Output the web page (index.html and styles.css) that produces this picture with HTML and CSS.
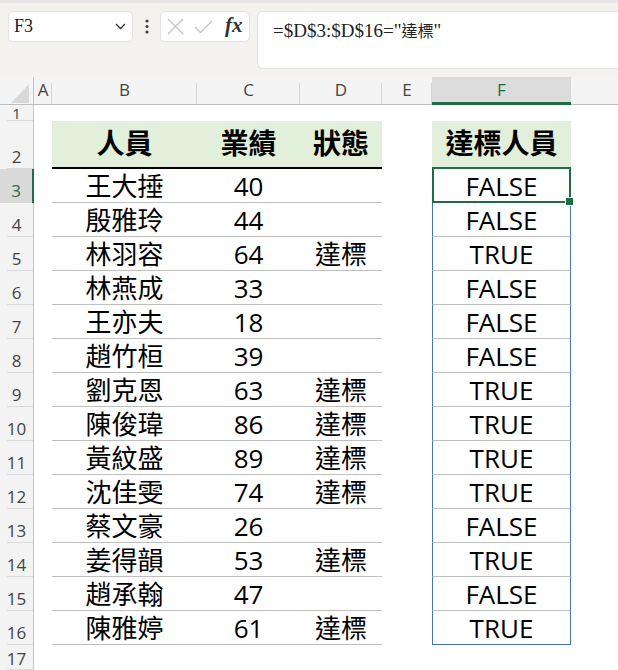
FILE: index.html
```html
<!DOCTYPE html>
<html lang="zh-Hant">
<head>
<meta charset="utf-8">
<title>Excel</title>
<link rel="stylesheet" href="styles.css">
</head>
<body>
<div class="top">
  <div class="namebox"><span>F3</span><svg width="11" height="7" viewBox="0 0 11 7"><polyline points="1,1 5.5,5.5 10,1" fill="none" stroke="#333" stroke-width="1.3"/></svg></div>
  <div class="dots"><svg width="4" height="15" viewBox="0 0 4 15"><circle cx="2" cy="2" r="1.6" fill="#444"/><circle cx="2" cy="7.5" r="1.6" fill="#444"/><circle cx="2" cy="13" r="1.6" fill="#444"/></svg></div>
  <div class="fnbox">
    <svg class="ix" width="17" height="17" viewBox="0 0 17 17"><path d="M1 1L16 16M16 1L1 16" stroke="#c4c4c4" stroke-width="1.4" fill="none"/></svg>
    <svg class="ic" width="19" height="14" viewBox="0 0 19 14"><polyline points="1,7 6.5,12.5 18,1" stroke="#c4c4c4" stroke-width="1.4" fill="none"/></svg>
    <span class="fx">fx</span>
  </div>
  <div class="formula">=$D$3:$D$16="<span class="cj">達標</span>"</div>
</div>

<div class="colhdr">
  <div class="corner"><svg width="18" height="19" viewBox="0 0 18 19"><polygon points="18,0 18,19 0,19" fill="#d9d9d9"/></svg></div>
  <div class="ch">A</div>
  <div class="ch">B</div>
  <div class="ch">C</div>
  <div class="ch">D</div>
  <div class="ch">E</div>
  <div class="ch sel">F</div>
  <div class="ch end"></div>
</div>

<div class="row r1"><div class="rh">1</div><div></div><div></div><div></div><div></div><div></div><div></div><div></div></div>
<div class="row r2"><div class="rh">2</div><div></div><div class="c hd">人員</div><div class="c hd">業績</div><div class="c hd">狀態</div><div></div><div class="c fh">達標人員</div><div></div></div>
<div class="row"><div class="rh on">3</div><div></div><div class="c t">王大捶</div><div class="c t">40</div><div class="c t"></div><div></div><div class="c f sel">FALSE</div><div></div></div>
<div class="row"><div class="rh">4</div><div></div><div class="c t">殷雅玲</div><div class="c t">44</div><div class="c t"></div><div></div><div class="c f">FALSE</div><div></div></div>
<div class="row"><div class="rh">5</div><div></div><div class="c t">林羽容</div><div class="c t">64</div><div class="c t">達標</div><div></div><div class="c f">TRUE</div><div></div></div>
<div class="row"><div class="rh">6</div><div></div><div class="c t">林燕成</div><div class="c t">33</div><div class="c t"></div><div></div><div class="c f">FALSE</div><div></div></div>
<div class="row"><div class="rh">7</div><div></div><div class="c t">王亦夫</div><div class="c t">18</div><div class="c t"></div><div></div><div class="c f">FALSE</div><div></div></div>
<div class="row"><div class="rh">8</div><div></div><div class="c t">趙竹桓</div><div class="c t">39</div><div class="c t"></div><div></div><div class="c f">FALSE</div><div></div></div>
<div class="row"><div class="rh">9</div><div></div><div class="c t">劉克恩</div><div class="c t">63</div><div class="c t">達標</div><div></div><div class="c f">TRUE</div><div></div></div>
<div class="row"><div class="rh">10</div><div></div><div class="c t">陳俊瑋</div><div class="c t">86</div><div class="c t">達標</div><div></div><div class="c f">TRUE</div><div></div></div>
<div class="row"><div class="rh">11</div><div></div><div class="c t">黃紋盛</div><div class="c t">89</div><div class="c t">達標</div><div></div><div class="c f">TRUE</div><div></div></div>
<div class="row"><div class="rh">12</div><div></div><div class="c t">沈佳雯</div><div class="c t">74</div><div class="c t">達標</div><div></div><div class="c f">TRUE</div><div></div></div>
<div class="row"><div class="rh">13</div><div></div><div class="c t">蔡文豪</div><div class="c t">26</div><div class="c t"></div><div></div><div class="c f">FALSE</div><div></div></div>
<div class="row"><div class="rh">14</div><div></div><div class="c t">姜得韻</div><div class="c t">53</div><div class="c t">達標</div><div></div><div class="c f">TRUE</div><div></div></div>
<div class="row"><div class="rh">15</div><div></div><div class="c t">趙承翰</div><div class="c t">47</div><div class="c t"></div><div></div><div class="c f">FALSE</div><div></div></div>
<div class="row"><div class="rh">16</div><div></div><div class="c t">陳雅婷</div><div class="c t">61</div><div class="c t">達標</div><div></div><div class="c f last">TRUE</div><div></div></div>
<div class="row r17"><div class="rh">17</div><div></div><div></div><div></div><div></div><div></div><div></div><div></div></div>
</body>
</html>
```
FILE: styles.css
```css
* { box-sizing: border-box; }
html, body { margin: 0; padding: 0; }
body {
  width: 618px;
  height: 670px;
  overflow: hidden;
  background: #fff;
  font-family: "Open Sans", "Noto Sans CJK TC", sans-serif;
}

/* toolbar */
.top {
  height: 77px;
  background: #f3f2ee;
  border-top: 3px solid #e6e6e6;
  display: flex;
  align-items: flex-start;
  padding: 8px 0 0 8px;
}
.namebox {
  width: 125px;
  height: 31px;
  background: #fff;
  border: 1px solid #e3e3e3;
  border-radius: 5px;
  display: flex;
  align-items: center;
  justify-content: space-between;
  padding: 0 6px 0 5px;
  font-family: "Liberation Serif", "Noto Sans CJK TC", serif;
  font-size: 18px;
  color: #222;
}
.dots {
  width: 27px;
  height: 31px;
  display: flex;
  align-items: center;
  justify-content: center;
}
.fnbox {
  width: 90px;
  height: 31px;
  background: #fff;
  border: 1px solid #e3e3e3;
  border-radius: 5px;
  display: flex;
  align-items: center;
  padding: 0 0 0 6px;
}
.ix { margin-right: 10px; }
.ic { margin-right: 12px; }
.fx {
  font-family: "Liberation Serif", serif;
  font-style: italic;
  font-weight: bold;
  font-size: 21px;
  line-height: 1;
  color: #333;
  margin-top: -3px;
}
.formula {
  margin-left: 7px;
  flex: 1;
  height: 58px;
  background: #fff;
  border: 1px solid #e3e3e3;
  border-right: none;
  border-radius: 6px 0 0 6px;
  padding: 6px 0 0 15px;
  font-family: "Liberation Serif", "Noto Sans CJK TC", serif;
  font-size: 19px;
  color: #222;
}
.cj { font-family: "Noto Sans CJK TC", sans-serif; font-size: 16px; }

/* column header */
.colhdr {
  display: grid;
  grid-template-columns: 34px 18px 145px 103px 82px 50px 139px 1fr;
  height: 28px;
  background: #f4f4f4;
  border-bottom: 1px solid #bdbdbd;
}
.corner {
  display: flex;
  align-items: flex-end;
  justify-content: flex-end;
  padding: 0 4px 1px 0;
  border-right: 1px solid #c6c6c6;
}
.ch {
  display: flex;
  align-items: center;
  justify-content: center;
  font-size: 17px;
  color: #444;
  padding-bottom: 2px;
  background: linear-gradient(#d6d6d6, #d6d6d6) right bottom / 1px 21px no-repeat;
}
.ch.sel {
  background-color: #dcdcdc;
  color: #1e6e42;
  border-bottom: 3px solid #1e6e42;
  padding-bottom: 0;
  margin-bottom: -1px;
}
.ch.end { background: none; }

/* rows */
.row {
  display: grid;
  grid-template-columns: 34px 18px 145px 103px 82px 50px 139px 1fr;
  height: 34px;
}
.r1 { height: 16px; }
.r2 { height: 48px; }
.r17 { height: 25px; }
.rh {
  background: #f3f3f3 linear-gradient(#dadada, #dadada) right bottom / 26px 1px no-repeat;
  border-right: 1px solid #c6c6c6;
  display: flex;
  justify-content: center;
  align-items: flex-end;
  padding-bottom: 4px;
  font-size: 17px;
  line-height: 17px;
  color: #444;
  overflow: hidden;
}
.r1 .rh {
  padding-bottom: 0;
  align-items: center;
  font-size: 15px;
  line-height: 14px;
  overflow: visible;
}
.r17 .rh { padding-bottom: 3px; }
.rh.on {
  background-color: #d9d9d9;
  color: #1e6e42;
  border-right: 2px solid #1e6e42;
}

.c {
  display: flex;
  align-items: center;
  justify-content: center;
  font-size: 26px;
  line-height: 1;
  color: #000;
  white-space: nowrap;
}
.t { border-bottom: 1px solid #bfbfbf; }
.hd {
  background: #e2efda;
  border-bottom: 2px solid #000;
  font-weight: bold;
  font-size: 28px;
  padding-bottom: 2px;
}
.fh {
  background: #e2efda;
  font-weight: bold;
  font-size: 28px;
  padding-bottom: 4px;
}
.f {
  border-left: 1px solid #4472c4;
  border-right: 1px solid #4472c4;
  border-bottom: 1px solid #bfbfbf;
}
.f.last { border-bottom-color: #4472c4; }
.f.sel { position: relative; }
.f.sel::before {
  content: "";
  position: absolute;
  left: -1px;
  top: -2px;
  right: -1px;
  bottom: -1px;
  border: 2px solid #1e6e42;
}
.f.sel::after {
  content: "";
  position: absolute;
  right: -4px;
  bottom: -4px;
  width: 7px;
  height: 7px;
  background: #1e6e42;
  border: 1px solid #fff;
}
```
